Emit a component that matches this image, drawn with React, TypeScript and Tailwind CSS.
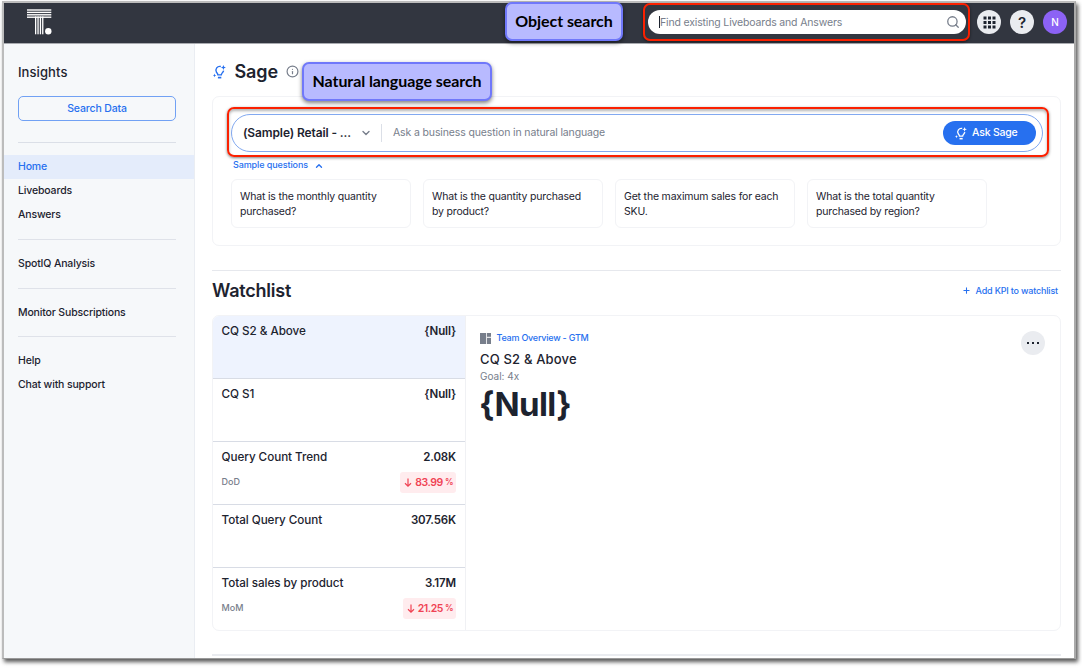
import type { ReactNode } from 'react';
import { ChevronDown, ChevronUp, Info, Search, Plus } from 'lucide-react';

function Logo() {
  return (
    <svg width="25" height="26" viewBox="0 0 25 26" fill="#fff">
      <rect x="0" y="0.3" width="24.3" height="1.4" />
      <rect x="0" y="2.7" width="24.3" height="1.4" />
      <rect x="0" y="5.1" width="24.3" height="1.4" />
      <rect x="0" y="7.5" width="24.3" height="1.4" />
      <rect x="8" y="7.5" width="1.3" height="17.8" />
      <rect x="10.4" y="7.5" width="1.3" height="17.8" />
      <rect x="12.8" y="7.5" width="1.3" height="17.8" />
      <rect x="15.1" y="7.5" width="1.3" height="17.8" />
      <circle cx="21.3" cy="22.3" r="3.2" />
    </svg>
  );
}

function SageIcon({ className = '' }: { className?: string }) {
  return (
    <svg viewBox="0 0 13 14" className={className} fill="none" stroke="currentColor" strokeWidth="1.4">
      <path d="M7.8 1.5A3.9 3.9 0 0 0 3.5 7.3C4.3 8.2 4.8 8.8 4.9 9.9H8.3C8.4 8.8 9 8.2 9.7 7.3 10.2 6.7 10.5 6.2 10.6 5.6" />
      <path d="M4.9 12.6h3.4" strokeWidth="1.7" />
      <path d="M10.4 0l.7 1.8 1.8.7-1.8.7-.7 1.8-.7-1.8-1.8-.7 1.8-.7z" fill="currentColor" stroke="none" />
      <path d="M1.5 8.6l.5 1.3 1.3.5-1.3.5-.5 1.3-.5-1.3-1-.5 1-.5z" fill="currentColor" stroke="none" />
    </svg>
  );
}

function NavItem({ label, active = false }: { label: string; active?: boolean }) {
  return (
    <a
      className={
        active
          ? 'flex h-6 items-center bg-[#e4ecfb] pl-3.5 text-[10.5px] font-medium tracking-[-0.15px] text-[#2770ef]'
          : 'flex h-6 items-center pl-3.5 text-[10.5px] font-medium tracking-[-0.15px] text-[#1d232f]'
      }
    >
      {label}
    </a>
  );
}

function Divider() {
  return <hr className="my-3 ml-3.5 w-[158px] border-t border-[#dfe2e9]" />;
}

function Sidebar() {
  return (
    <nav className="flex w-[191px] shrink-0 flex-col border-r border-[#eaedf2] bg-[#f6f8fa]">
      <h2 className="ml-3.5 mt-[18px] h-5 text-[13px] font-medium leading-5 tracking-[0.08px] text-[#1d232f]">Insights</h2>
      <button className="ml-3.5 mt-3.5 flex h-[25px] w-[158px] items-center justify-center rounded-[5px] border border-[#71a1f4] text-[10.5px] font-medium leading-[23px] tracking-[-0.15px] text-[#2770ef]">
        Search Data
      </button>
      <hr className="mb-3 ml-3.5 mt-[21px] w-[158px] border-t border-[#dbdfe7]" />
      <NavItem label="Home" active />
      <NavItem label="Liveboards" />
      <NavItem label="Answers" />
      <Divider />
      <NavItem label="SpotIQ Analysis" />
      <hr className="mb-3 ml-3.5 mt-[11.5px] w-[158px] border-t border-[#dfe2e9]" />
      <NavItem label="Monitor Subscriptions" />
      <hr className="mb-3 ml-3.5 mt-[11.5px] w-[158px] border-t border-[#dfe2e9]" />
      <NavItem label="Help" />
      <NavItem label="Chat with support" />
    </nav>
  );
}

function Callout({ children, className }: { children: ReactNode; className: string }) {
  return (
    <div
      className={`absolute z-20 flex items-center justify-center whitespace-nowrap rounded-[7px] border-2 border-[#7078fa] bg-[#b8baff] pb-px font-['Lato',sans-serif] text-[16px] font-bold tracking-[-0.07px] text-black shadow-[0_2px_4px_rgba(0,0,0,0.5)] ${className}`}
    >
      {children}
    </div>
  );
}

function Header() {
  return (
    <header className="flex h-[41px] shrink-0 items-center border-b border-[#a9abb0] bg-[#323640] pb-[2px] pl-[23px] pr-[7px]">
      <Logo />
      <div className="relative ml-auto mr-[11px] flex h-6 w-[318px] items-center rounded-full bg-white pl-[11px] pr-[6px]">
        <span className="h-3 w-px bg-[#1d232f]" />
        <span className="flex-1 pt-px text-[10.5px] leading-[15px] tracking-[-0.16px] text-[#777e8b]">
          Find existing Liveboards and Answers
        </span>
        <Search size={14} strokeWidth={2.2} className="text-[#777e8b]" />
        <div className="absolute -bottom-[7px] -left-[5px] -right-[4px] -top-[7px] rounded-[7px] border-2 border-[#fb2000] shadow-[0_1px_3px_rgba(0,0,0,0.5)]" />
      </div>
      <div className="flex gap-[9px]">
        <div className="flex size-6 items-center justify-center rounded-full bg-[#eaecf0]">
          <svg width="13" height="13" viewBox="0 0 13 13" fill="#1d232f">
            {[0.5, 5, 9.5].map((y) => [0.5, 5, 9.5].map((x) => <rect key={`${x}-${y}`} x={x} y={y} width="3" height="3" />))}
          </svg>
        </div>
        <div className="flex size-6 items-center justify-center rounded-full bg-[#eaecf0] text-[15px] font-semibold leading-none text-[#1d232f]">?</div>
        <div className="flex size-6 items-center justify-center rounded-full bg-[#8c62f5] text-[10px] font-medium leading-none text-white">N</div>
      </div>
    </header>
  );
}

const questions = [
  ['What is the monthly quantity', 'purchased?'],
  ['What is the quantity purchased', 'by product?'],
  ['Get the maximum sales for each', 'SKU.'],
  ['What is the total quantity', 'purchased by region?'],
];

function SagePanel() {
  return (
    <section className="h-[150px] rounded-[7px] border border-[#f2f3f6] px-[18px] pt-[17px]">
      <div className="relative flex h-[38px] w-[812px] items-center rounded-full border border-[#82a9f0] pl-[11px] pr-[6px]">
        <span className="w-[123px] text-[12px] font-semibold tracking-[-0.12px] text-[#1d232f]">(Sample) Retail - ...</span>
        <ChevronDown size={12} strokeWidth={2.8} className="-ml-[6px] text-[#777e8b]" />
        <span className="ml-[9px] h-[18px] w-px bg-[#dbdfe7]" />
        <span className="ml-[11px] flex-1 text-[10.5px] tracking-[-0.13px] text-[#777e8b]">
          Ask a business question in natural language
        </span>
        <button className="flex h-6 w-[93px] items-center rounded-full bg-[#2770ef] pl-3 text-[10.5px] font-medium tracking-[-0.2px] text-white">
          <SageIcon className="mr-[5px] h-[13px] w-3" />
          Ask Sage
        </button>
        <div className="absolute -bottom-[6px] -left-[5px] -right-[7px] -top-[8px] rounded-[7px] border-2 border-[#fb2000] shadow-[0_1px_3px_rgba(0,0,0,0.5),inset_0_2px_3px_rgba(0,0,0,0.3)]" />
      </div>
      <div className="ml-[2px] mt-[5px] flex h-4 items-center text-[9px] font-medium tracking-[-0.1px] text-[#2770ef]">
        Sample questions
        <ChevronUp size={10} strokeWidth={3.2} className="ml-[6px] mt-[2px]" />
      </div>
      <div className="mt-[6px] flex gap-3">
        {questions.map(([a, b]) => (
          <div
            key={a}
            className="h-[49px] w-[180px] rounded-[6px] border border-[#f2f3f6] pl-2 pt-[9px] text-[10.5px] leading-[15px] tracking-[-0.18px] text-[#1d232f]"
          >
            {a}
            <br />
            {b}
          </div>
        ))}
      </div>
    </section>
  );
}

const kpis = [
  { name: 'CQ S2 & Above', value: '{Null}' },
  { name: 'CQ S1', value: '{Null}' },
  { name: 'Query Count Trend', value: '2.08K', period: 'DoD', change: '83.99' },
  { name: 'Total Query Count', value: '307.56K' },
  { name: 'Total sales by product', value: '3.17M', period: 'MoM', change: '21.25' },
];

function Watchlist() {
  return (
    <section className="flex h-[316px] overflow-hidden rounded-[7px] border border-[#f2f3f6]">
      <div className="w-[253px] border-r border-[#f0f1f4]">
        {kpis.map((k, i) => (
          <div
            key={k.name}
            className={`h-[63px] pl-[8.5px] pr-[9px] pt-[6px] ${i === 0 ? 'bg-[#eef3fe]' : ''} ${i < 4 ? 'border-b border-[#d8dce5]' : ''}`}
          >
            <div className="flex h-[19px] items-center justify-between text-[#1d232f]">
              <span className="text-[11.7px] font-medium tracking-[-0.05px]">{k.name}</span>
              <span className="text-[11.5px] font-semibold tracking-[-0.15px]">{k.value}</span>
            </div>
            {k.change && (
              <div className="mt-[5px] flex h-[21px] items-center justify-between">
                <span className="pb-px text-[9px] font-medium text-[#777e8b]">{k.period}</span>
                <span className="flex h-[21px] items-center rounded-[3px] bg-[#ffecee] pl-1 pr-[3px] text-[10.5px] font-semibold tracking-[-0.45px] text-[#f04354]">
                  <svg width="8" height="9" viewBox="0 0 8 9" className="mr-[3px]" fill="none" stroke="currentColor" strokeWidth="1.2">
                    <path d="M4 0.5V8M1 5.2L4 8.1L7 5.2" />
                  </svg>
                  {k.change}
                  <span className="ml-[2px] text-[8.5px]">%</span>
                </span>
              </div>
            )}
          </div>
        ))}
      </div>
      <div className="flex flex-1 items-start justify-between pl-[14px] pr-[15px]">
        <div className="pt-[13px]">
          <div className="flex h-4 items-center">
            <svg width="11" height="11" viewBox="0 0 11 11" className="mt-[2px]" fill="#777e8b">
              <rect width="6.2" height="11" />
              <rect x="7" width="4" height="3.8" />
              <rect x="7" y="4.8" width="4" height="6.2" />
            </svg>
            <span className="ml-[5.5px] pt-px text-[9px] font-medium leading-[15px] tracking-[-0.23px] text-[#2770ef]">Team Overview - GTM</span>
          </div>
          <h3 className="mt-[3px] h-[22px] text-[13px] font-medium leading-[22px] tracking-[0.17px] text-[#1d232f]">CQ S2 &amp; Above</h3>
          <p className="h-3 text-[10px] leading-3 text-[#777e8b]">Goal: 4x</p>
          <p className="-ml-px mt-px h-[42px] text-[33px] font-bold leading-[42px] tracking-[-0.6px] text-[#1d232f]">{'{Null}'}</p>
        </div>
        <button className="mt-[15px] flex size-6 items-center justify-center gap-[3px] rounded-full bg-[#eaecf0]">
          <span className="size-[2px] bg-[#1d232f]" />
          <span className="size-[2px] bg-[#1d232f]" />
          <span className="size-[2px] bg-[#1d232f]" />
        </button>
      </div>
    </section>
  );
}

export default function App() {
  return (
    <div className="h-[668px] w-[1082px] overflow-hidden bg-white pl-[2px] pt-px font-['Inter',sans-serif]">
      <div className="relative flex h-[658px] w-[1074px] flex-col border-b border-l-2 border-r-2 border-t-2 border-[#bcbcbc] border-b-[#999] border-r-[#aaa] bg-white shadow-[2px_3px_4px_rgba(0,0,0,0.65)]">
        <Header />
        <div className="flex min-h-0 flex-1">
          <Sidebar />
          <main className="flex flex-1 flex-col pl-[17px] pr-[13px] pt-[15px]">
            <div className="mb-[12px] flex h-[25px] items-center">
              <SageIcon className="ml-px h-[14px] w-[13px] text-[#2770ef]" />
              <h1 className="ml-[8.5px] text-[18px] font-semibold tracking-[-0.1px] text-[#1d232f]">Sage</h1>
              <Info size={13} strokeWidth={2.2} className="ml-[8px] text-[#777e8b]" />
            </div>
            <div className="w-[849px]">
              <SagePanel />
              <hr className="mt-6 border-t border-[#e6e8ed]" />
              <div className="flex h-[44px] items-center justify-between pb-[5px] pr-[3px]">
                <h2 className="text-[18px] font-semibold tracking-[-0.22px] text-[#1d232f]">Watchlist</h2>
                <a className="flex items-center text-[9px] font-medium tracking-[-0.18px] text-[#2770ef]">
                  <Plus size={9} strokeWidth={2.8} className="mr-[5px]" />
                  Add KPI to watchlist
                </a>
              </div>
              <Watchlist />
              <hr className="mt-[23px] border-t-2 border-[#eaecf0]" />
            </div>
          </main>
        </div>
        <Callout className="left-[501px] top-[-1px] h-[39px] w-[118px]">Object search</Callout>
        <Callout className="left-[298px] top-[59px] h-[39px] w-[190px]">Natural language search</Callout>
      </div>
    </div>
  );
}
